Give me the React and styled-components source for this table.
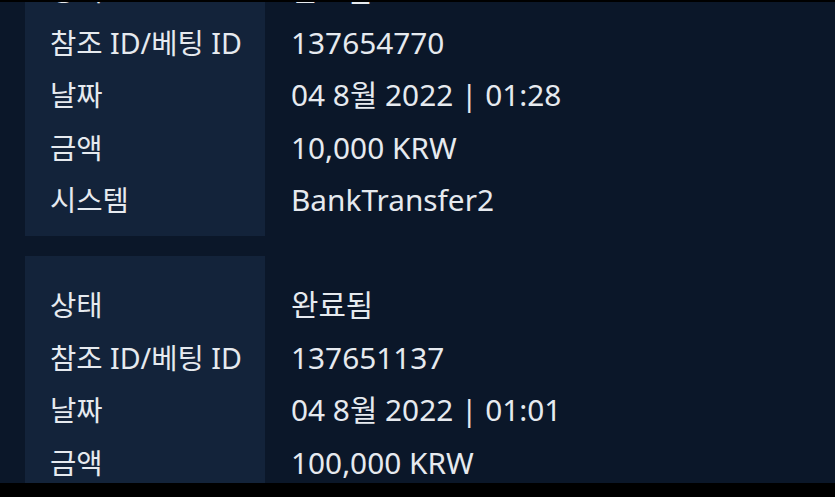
import React from "react";
import styled, { createGlobalStyle } from "styled-components";

const GlobalStyle = createGlobalStyle`
  html, body { margin: 0; padding: 0; background: #000; }
  body { font-family: "Noto Sans", "Noto Sans CJK KR", sans-serif; }
`;

const Screen = styled.div`
  width: 835px;
  height: 497px;
  display: flex;
  flex-direction: column;
  background: #000;
  overflow: hidden;
`;

const Bar = styled.div`
  flex: 0 0 ${(p) => p.$h}px;
  background: #000;
`;

const Viewport = styled.div`
  flex: 1 1 auto;
  overflow: hidden;
  background: #0b1729;
`;

const List = styled.div`
  display: flex;
  flex-direction: column;
  gap: 20px;
  margin-top: -61.5px;
`;

const Entry = styled.div`
  display: grid;
  grid-template-columns: 25px 240px 1fr;
`;

const Column = styled.div`
  grid-column: ${(p) => p.$col};
  background: ${(p) => (p.$card ? "#13233a" : "transparent")};
  padding: 23.75px 0 8.75px ${(p) => (p.$card ? 25 : 26)}px;
  display: flex;
  flex-direction: column;
`;

const Cell = styled.div`
  height: 52.5px;
  line-height: 52.5px;
  font-family: "Noto Sans", "Noto Sans CJK KR", sans-serif;
  font-size: ${(p) => (p.$value ? 29.8 : 28.6)}px;
  color: #e6eaef;
  white-space: nowrap;
`;

const entries = [
  [
    ["상태", "완료됨"],
    ["참조 ID/베팅 ID", "137654770"],
    ["날짜", "04 8월 2022 | 01:28"],
    ["금액", "10,000 KRW"],
    ["시스템", "BankTransfer2"],
  ],
  [
    ["상태", "완료됨"],
    ["참조 ID/베팅 ID", "137651137"],
    ["날짜", "04 8월 2022 | 01:01"],
    ["금액", "100,000 KRW"],
    ["시스템", "BankTransfer2"],
  ],
];

export default function App() {
  return (
    <>
      <GlobalStyle />
      <Screen>
        <Bar $h={2} />
        <Viewport>
          <List>
            {entries.map((rows, i) => (
              <Entry key={i}>
                <Column $col={2} $card>
                  {rows.map(([label]) => (
                    <Cell key={label}>{label}</Cell>
                  ))}
                </Column>
                <Column $col={3}>
                  {rows.map(([label, value]) => (
                    <Cell key={label} $value>
                      {value}
                    </Cell>
                  ))}
                </Column>
              </Entry>
            ))}
          </List>
        </Viewport>
        <Bar $h={14} />
      </Screen>
    </>
  );
}
